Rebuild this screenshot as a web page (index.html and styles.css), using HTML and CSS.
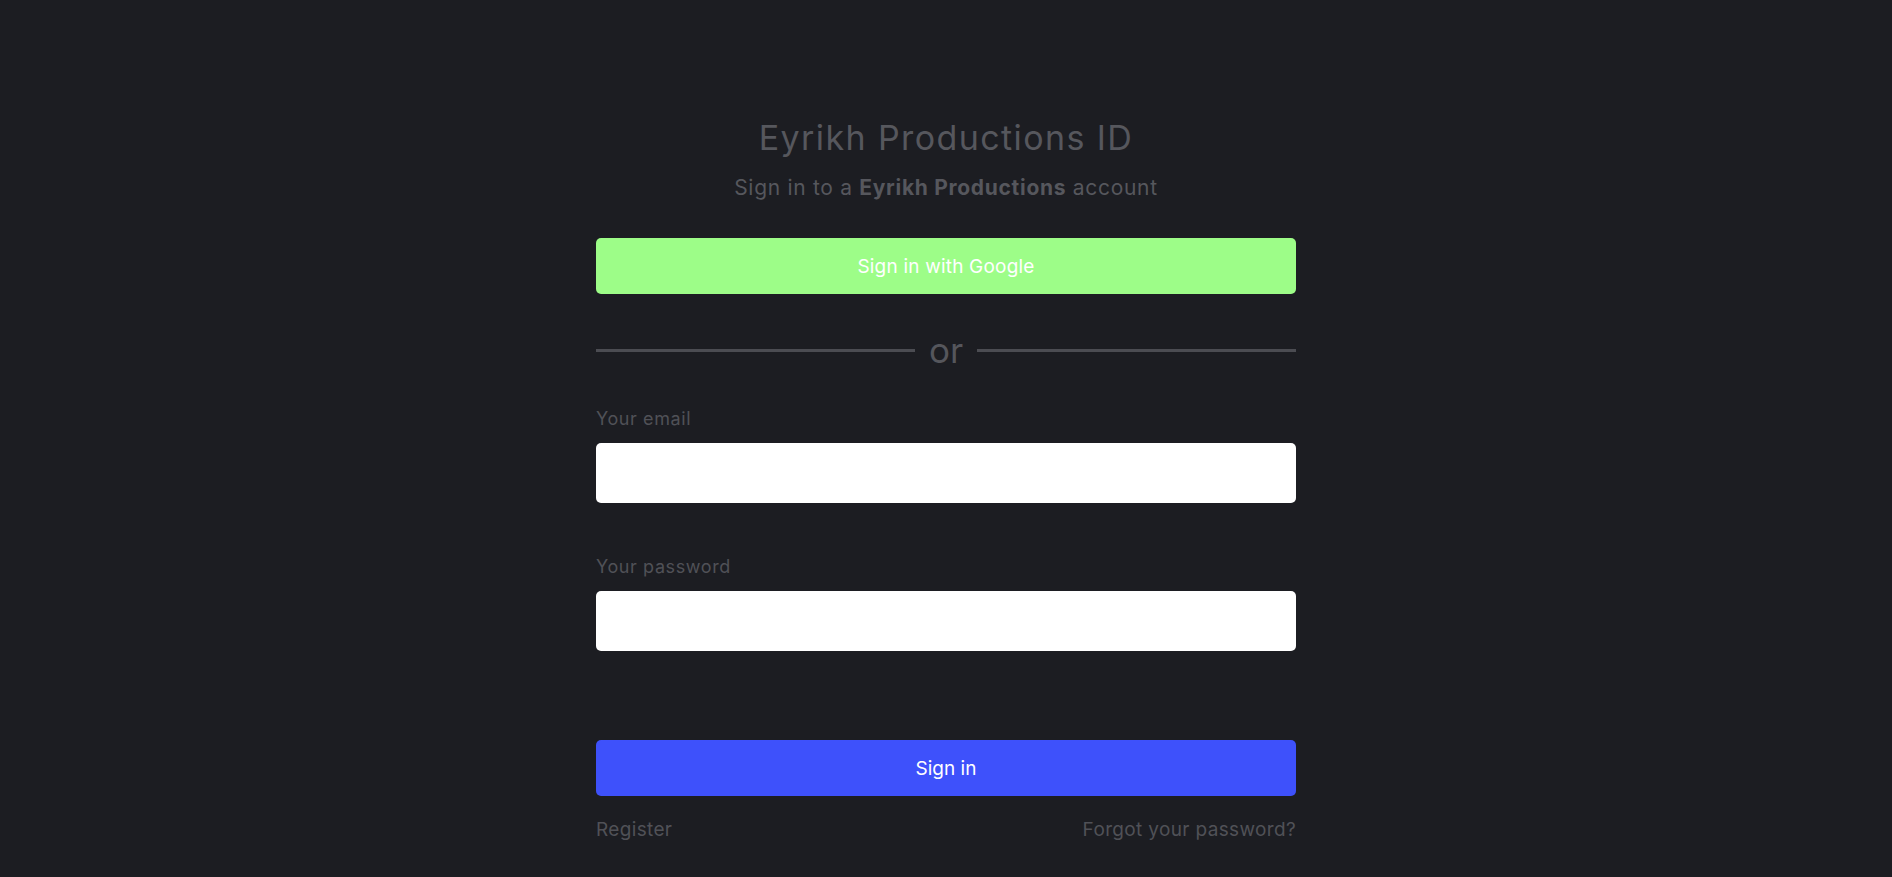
FILE: index.html
```html
<!DOCTYPE html>
<html lang="en">
<head>
<meta charset="utf-8">
<title>Eyrikh Productions ID</title>
<link rel="stylesheet" href="styles.css">
</head>
<body>
<main class="page">
  <div class="card">
    <h1 class="title">Eyrikh Productions ID</h1>
    <p class="subtitle">Sign in to a <b>Eyrikh Productions</b> account</p>
    <button class="btn btn-google" type="button">Sign in with Google</button>
    <div class="divider"><span class="line"></span><span class="or">or</span><span class="line"></span></div>
    <form class="form">
      <label class="label" for="email">Your email</label>
      <input class="input" id="email" type="email">
      <label class="label label-pass" for="password">Your password</label>
      <input class="input" id="password" type="password">
      <button class="btn btn-primary" type="button">Sign in</button>
    </form>
    <div class="links">
      <a class="link" href="#">Register</a>
      <a class="link" href="#">Forgot your password?</a>
    </div>
  </div>
</main>
</body>
</html>
```
FILE: styles.css
```css
html, body {
  margin: 0;
  padding: 0;
  background: #1c1d22;
  height: 100%;
}
body {
  font-family: Inter, Roboto, "Noto Sans", "Liberation Sans", sans-serif;
  color: #55565c;
}
.page {
  display: flex;
  justify-content: center;
  padding-top: 118px;
}
.card {
  width: 700px;
  display: flex;
  flex-direction: column;
}
.title {
  margin: 0;
  font-size: 34px;
  line-height: 40px;
  font-weight: 400;
  text-align: center;
  color: #56575d;
  letter-spacing: 1.4px;
}
.subtitle {
  margin: 16px 0 0;
  font-size: 21px;
  line-height: 28px;
  text-align: center;
  color: #56575d;
  letter-spacing: 0.7px;
}
.subtitle b {
  font-weight: 700;
}
.btn {
  display: block;
  width: 100%;
  height: 56px;
  border: 0;
  border-radius: 5px;
  font-family: inherit;
  font-size: 19px;
  color: #ffffff;
  cursor: pointer;
}
.btn-google {
  margin-top: 36px;
  background: #9dfd88;
  letter-spacing: 0.2px;
}
.divider {
  margin-top: 34px;
  height: 44px;
  display: flex;
  align-items: center;
  gap: 14px;
}
.line {
  flex: 1;
  height: 3px;
  background: #4b4c52;
}
.or {
  font-size: 35px;
  line-height: 44px;
  color: #55565c;
}
.form {
  display: flex;
  flex-direction: column;
  margin-top: 35px;
}
.label {
  font-size: 18px;
  line-height: 24px;
  color: #505157;
  letter-spacing: 0.6px;
}
.label-pass {
  margin-top: 52px;
}
.input {
  margin-top: 12px;
  height: 60px;
  border: 0;
  border-radius: 5px;
  background: #ffffff;
  padding: 0 12px;
  font-family: inherit;
  font-size: 18px;
  outline: none;
}
.btn-primary {
  margin-top: 89px;
  background: #3e51fb;
}
.links {
  margin-top: 22px;
  display: flex;
  justify-content: space-between;
}
.link {
  font-size: 19px;
  line-height: 24px;
  color: #505157;
  text-decoration: none;
  letter-spacing: 0.35px;
}
```
